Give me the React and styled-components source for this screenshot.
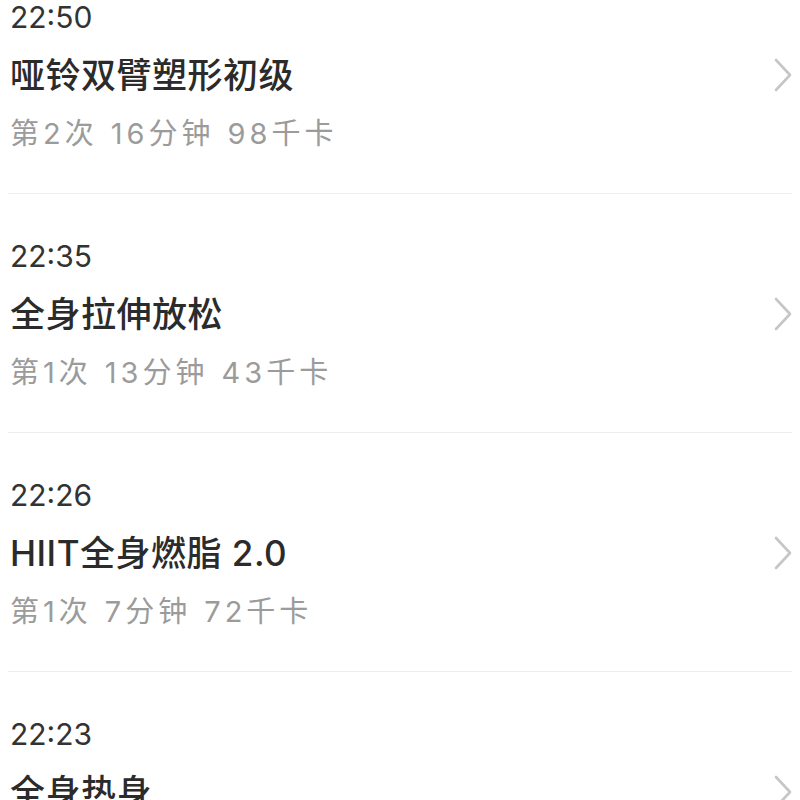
import React from 'react'
import styled, { createGlobalStyle } from 'styled-components'

const GlobalStyle = createGlobalStyle`
    html, body {
        margin: 0;
        padding: 0;
        background: #fff;
        overflow: hidden;
    }
    body {
        font-family: Inter, "Noto Sans CJK SC", sans-serif;
    }
`

const List = styled.ul`
    list-style: none;
    margin: -45px 0 0;
    padding: 0;
`

const Row = styled.li`
    margin: 0 8px;
    padding: 44px 0 41px 2px;
    border-bottom: 1px solid #ededed;
`

const Time = styled.div`
    font-size: 30px;
    line-height: 36px;
    color: #333;
`

const TitleLine = styled.div`
    display: flex;
    align-items: center;
    justify-content: space-between;
    margin-top: 16px;
    height: 48px;
`

const Title = styled.div`
    font-size: 35px;
    line-height: 48px;
    font-weight: 500;
    color: #2b2b2b;
    letter-spacing: 0.5px;
`

const Chevron = styled.svg`
    flex: none;
    width: 20px;
    height: 34px;
    margin-right: -1px;
`

const Meta = styled.div`
    display: flex;
    gap: 13px;
    margin-top: 17px;
    font-size: 29px;
    line-height: 36px;
    color: #9b9b9b;

    span {
        letter-spacing: 4px;
    }
`

const records = [
    { time: '22:50', title: '哑铃双臂塑形初级', count: '第2次', minutes: '16分钟', kcal: '98千卡' },
    { time: '22:35', title: '全身拉伸放松', count: '第1次', minutes: '13分钟', kcal: '43千卡' },
    { time: '22:26', title: 'HIIT全身燃脂 2.0', count: '第1次', minutes: '7分钟', kcal: '72千卡' },
    { time: '22:23', title: '全身热身', count: '第1次', minutes: '5分钟', kcal: '30千卡' },
]

const ArrowRight = () => (
    <Chevron viewBox="0 0 20 34" fill="none">
        <path d="M3 2 L17 17 L3 32" stroke="#c6c6c6" strokeWidth="2.6" strokeLinecap="round" strokeLinejoin="round" />
    </Chevron>
)

const App = () => {
    return (
        <>
            <GlobalStyle />
            <List>
                {records.map((r) => (
                    <Row key={r.time}>
                        <Time>{r.time}</Time>
                        <TitleLine>
                            <Title>{r.title}</Title>
                            <ArrowRight />
                        </TitleLine>
                        <Meta>
                            <span>{r.count}</span>
                            <span>{r.minutes}</span>
                            <span>{r.kcal}</span>
                        </Meta>
                    </Row>
                ))}
            </List>
        </>
    )
}

export default App
